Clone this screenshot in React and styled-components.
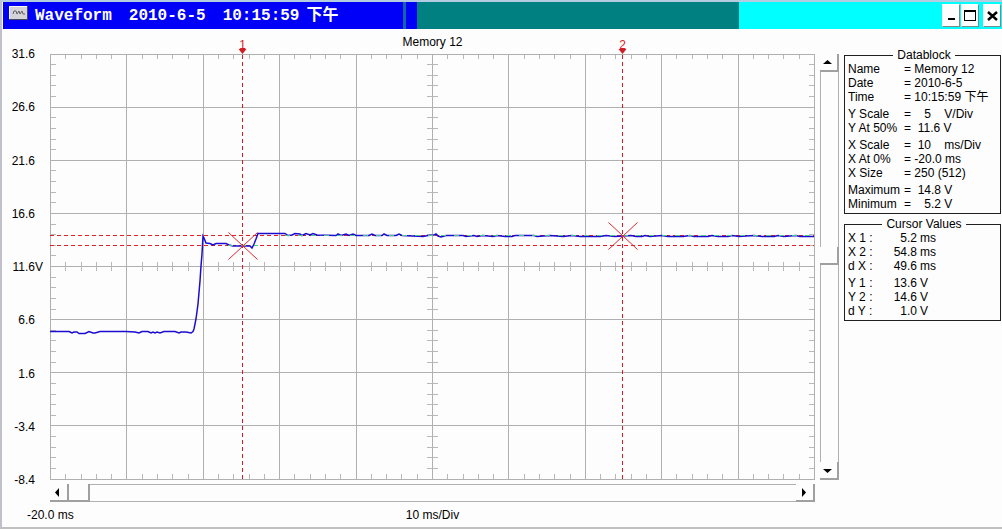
import React from "react";
import styled, { createGlobalStyle } from "styled-components";

const GRID_W = 764;
const GRID_H = 425;
const COLS = 10;
const ROWS = 8;

const yLabels = ["31.6", "26.6", "21.6", "16.6", "11.6", "6.6", "1.6", "-3.4", "-8.4"];

const datablock = [
  [
    ["Name", "= Memory 12"],
    ["Date", "= 2010-6-5"],
    ["Time", "= 10:15:59 下午"],
  ],
  [
    ["Y Scale", "=    5    V/Div"],
    ["Y At 50%", "=  11.6 V"],
  ],
  [
    ["X Scale", "=  10    ms/Div"],
    ["X At 0%", "= -20.0 ms"],
    ["X Size", "= 250 (512)"],
  ],
  [
    ["Maximum", "=  14.8 V"],
    ["Minimum", "=    5.2 V"],
  ],
];

const cursorValues = [
  [
    ["X 1 :", "5.2", "ms"],
    ["X 2 :", "54.8", "ms"],
    ["d X :", "49.6", "ms"],
  ],
  [
    ["Y 1 :", "13.6", "V"],
    ["Y 2 :", "14.6", "V"],
    ["d Y :", "1.0", "V"],
  ],
];

const cursors = [
  { name: "1", x: 192.5, y: 191.5 },
  { name: "2", x: 572.5, y: 181.5 },
];

const trace =
  "0,277.5 19,277.5 22,279 24,278 27,278 29,279.5 35,279.5 39,277.5 43,279 45,279 50,277.5 " +
  "76,277.5 85,278 89,279 92,277.5 98,277.5 101,279 103,278 105,279 107,278 110,279 114,277.5 " +
  "125,277.5 129,279 131,278 136,278 141,279 143,277.5 144,275 146,265 148,250 150,227 151,212 " +
  "152,200 153,182 154,184 156,189 160,189.5 163,191 166,189.5 176,189.5 179,191 183,192 200,192 " +
  "202,194 204,190 206,185 208,179.5 235,179.5 238,181.5 242,181 245,179.5 250,180 252,181.5 " +
  "256,179.5 260,181 263,179.5 267,181 286,181.5 288,180 291,181.5 296,180 299,181.5 303,180 " +
  "306,181.5 319,181.5 322,180 325,181.5 332,181.5 334,180 337,181.5 346,181.5 349,180 352,181.5 " +
  "373,182.5 378,181.5 384,181 386,180 388,182 391,183 396,181.5 413,181.5 416,182.5 424,181.5 " +
  "427,182.5 433,181.5 443,182.5 447,181.5 455,182.5 462,182.5 465,181.5 484,181.5 487,182.5 " +
  "500,181.5 513,182.5 522,181.5 530,182.5 550,182.5 556,181.5 565,182.5 581,181.5 586,182.5 " +
  "592,182.5 595,181.5 600,182.5 612,181.5 618,182.5 633,182.5 640,181.5 644,182.5 658,182.5 " +
  "662,181.5 668,182.5 678,182.5 682,181.5 689,182.5 704,181.5 712,182.5 724,182.5 728,181.5 " +
  "734,182.5 746,181.5 750,182.5 764,182.5";

const range = (n) => Array.from({ length: n }, (_, i) => i);

const gridX = (i) => Math.round((i * GRID_W) / COLS) + 0.5;
const gridY = (i) => Math.floor((i * GRID_H) / ROWS) + 0.5;

const Graticule = () => {
  const major = [
    ...range(COLS + 1).map((i) => `M${gridX(i)} 0V${GRID_H + 1}`),
    ...range(ROWS + 1).map((i) => `M0 ${gridY(i)}H${GRID_W + 1}`),
  ].join("");

  // five small ticks to a division
  const minorX = range(COLS * 5)
    .filter((i) => i % 5 !== 0)
    .map((i) => gridX(i / 5))
    .map((x) => `M${x} 1V5M${x} 208V217M${x} 420V425`)
    .join("");
  const minorY = range(ROWS * 5)
    .filter((i) => i % 5 !== 0)
    .map((i) => gridY(i / 5))
    .map((y) => `M1 ${y}H6M377 ${y}H388M759 ${y}H764`)
    .join("");

  return (
    <g fill="none" shapeRendering="crispEdges">
      <path d={major} stroke="#b0b0b0" />
      <path d={minorX + minorY} stroke="#b8b8b8" />
    </g>
  );
};

const Cursor = ({ name, x, y }) => (
  <g>
    <path d={`M${x} 1V425`} fill="none" stroke="#d81824" strokeDasharray="4 3" />
    <path d={`M0 ${y}H764`} fill="none" stroke="#e02028" strokeDasharray="4 3" />
    <path d={`M${x - 4} -5h8l-4 5z`} fill="#d01c24" />
    <CursorName x={x} y="-5">{name}</CursorName>
  </g>
);

const Plot = () => (
  <PlotSvg viewBox="0 0 765 426" role="img" aria-label="Memory 12">
    <Graticule />
    {cursors.map((c) => (
      <Cursor key={c.name} {...c} />
    ))}
    <polyline points={trace} fill="none" stroke="#1c0cd0" strokeWidth="1.5" />
    <path
      d="M178 191.5H208M235 181.5H764"
      fill="none"
      stroke="#48c890"
      strokeDasharray="5 8"
      strokeWidth="1"
    />
    {cursors.map((c) => (
      <path
        key={c.name}
        d={`M${c.x - 14} ${c.y - 13}l29 27m0 -27l-29 27`}
        fill="none"
        stroke="#e02830"
      />
    ))}
  </PlotSvg>
);

const Arrow = ({ d }) => (
  <svg width="9" height="9" viewBox="0 0 9 9" aria-hidden="true">
    <path d={d} fill="#000" />
  </svg>
);

const App = () => {
  return (
    <>
      <GlobalStyle />
      <Window>
        <TitleBar>
          <AppIcon width="19" height="14" viewBox="0 0 19 14" aria-hidden="true">
            <path d="M0 0h19v14H0z" fill="#d4d4d8" />
            <path d="M18 0v13H0v1h19V0z" fill="#48485c" />
            <path d="M0 13V0h18v1H1v12z" fill="#f8f8f8" />
            <path d="M4 8l1-3h2l1 3 2-3 1 3 2-3 1 3h2" fill="none" stroke="#606068" />
          </AppIcon>
          <Title>
            <span>Waveform</span>
            <span>2010-6-5</span>
            <TitleTime>
              <span>10:15:59</span>
              <span>下午</span>
            </TitleTime>
          </Title>
          <WindowButtons>
            <WindowButton aria-label="Minimize">
              <svg width="13" height="13" viewBox="0 0 13 13">
                <path d="M3 9h7v2H3z" />
              </svg>
            </WindowButton>
            <WindowButton aria-label="Maximize">
              <svg width="13" height="13" viewBox="0 0 13 13">
                <path d="M0 1h12v11H0zM1 3v8h10V3z" fillRule="evenodd" />
              </svg>
            </WindowButton>
            <WindowButton aria-label="Close" $apart>
              <svg width="13" height="13" viewBox="0 0 13 13">
                <path d="M2 3l9 8m0 -8l-9 8" stroke="#000" strokeWidth="2.4" />
              </svg>
            </WindowButton>
          </WindowButtons>
        </TitleBar>

        <Content>
          <PlotTitle>Memory 12</PlotTitle>
          <YAxis>
            {yLabels.map((label) => (
              <YLabel key={label}>
                <span>{label}</span>
                {label === "11.6" && "V"}
              </YLabel>
            ))}
          </YAxis>
          <Plot />
          <VScroll>
            <ArrowButton aria-label="Scroll up" $vertical>
              <Arrow d="M0 6l4.5 -4L9 6z" />
            </ArrowButton>
            <VTrack type="range" aria-label="Vertical position" defaultValue="47" />
            <ArrowButton aria-label="Scroll down" $vertical>
              <Arrow d="M0 3l4.5 4L9 3z" />
            </ArrowButton>
          </VScroll>
          <HScroll>
            <ArrowButton aria-label="Scroll left">
              <Arrow d="M6 0L2 4.5L6 9z" />
            </ArrowButton>
            <HTrack type="range" aria-label="Horizontal position" defaultValue="0" />
            <ArrowButton aria-label="Scroll right">
              <Arrow d="M3 0l4 4.5L3 9z" />
            </ArrowButton>
          </HScroll>
          <XStart>-20.0 ms</XStart>
          <XUnit>10 ms/Div</XUnit>

          <SidePanel>
            <Group>
              <legend>Datablock</legend>
              <DataTable>
                {datablock.map((rows, i) => (
                  <RowGroup key={i}>
                    {rows.map(([label, value]) => (
                      <tr key={label}>
                        <LabelCell $width="56px">{label}</LabelCell>
                        <ValueCell>{value}</ValueCell>
                      </tr>
                    ))}
                  </RowGroup>
                ))}
              </DataTable>
            </Group>
            <Group>
              <legend>Cursor Values</legend>
              <DataTable>
                {cursorValues.map((rows, i) => (
                  <RowGroup key={i}>
                    {rows.map(([label, value, unit]) => (
                      <tr key={label}>
                        <LabelCell $width="36px">{label}</LabelCell>
                        <NumberCell>{value}</NumberCell>
                        <ValueCell>{unit}</ValueCell>
                      </tr>
                    ))}
                  </RowGroup>
                ))}
              </DataTable>
            </Group>
          </SidePanel>
        </Content>
      </Window>
    </>
  );
};

export default App;

const GlobalStyle = createGlobalStyle`
  * {
    box-sizing: border-box;
  }

  body {
    margin: 0;
    background: #fdfdfd;
    color: #000;
    font: 12px/14px "Liberation Sans", "Noto Sans CJK SC", sans-serif;
  }
`;

const Window = styled.div`
  display: flex;
  flex-direction: column;
  min-height: 100vh;
  border-top: 2px solid #b4cce0;
  border-left: 2px solid #c0c0cc;
  border-bottom: 2px solid #c0c0c0;
  padding-left: 1px;
`;

const TitleBar = styled.header`
  display: flex;
  align-items: center;
  height: 27px;
  padding-left: 6px;
  background: linear-gradient(
    to right,
    #0000f8 400px,
    #1464a8 400px 403px,
    #0000f8 403px 414px,
    #008080 414px 73.7%,
    #00ffff 73.7%
  );
`;

const AppIcon = styled.svg`
  align-self: flex-start;
  margin-top: 4px;
`;

const Title = styled.h1`
  display: flex;
  flex: 1;
  gap: 17px;
  margin: 0 0 0 7px;
  color: #fff;
  font: bold 16px/20px "Liberation Mono", "Noto Sans CJK SC", monospace;
`;

const TitleTime = styled.span`
  display: flex;
  gap: 7px;
`;

const WindowButtons = styled.div`
  display: flex;
  gap: 1px;
  padding-right: 1px;
`;

const WindowButton = styled.button`
  display: flex;
  align-items: center;
  justify-content: center;
  width: 18px;
  height: 23px;
  margin-left: ${({ $apart }) => ($apart ? "3px" : "0")};
  padding: 0;
  border: 1px solid #fff;
  border-right-color: #788c8c;
  border-bottom-color: #788c8c;
  background: #fdfdfd;
`;

const Content = styled.main`
  display: grid;
  flex: 1;
  grid-template-columns: 47px minmax(0, 1fr) 24px 162px;
  grid-template-rows: 25px auto 22px 1fr;
  padding-right: 1px;
`;

const PlotTitle = styled.h2`
  grid-area: 1 / 2;
  align-self: center;
  margin: 0;
  font-size: 12px;
  font-weight: normal;
  text-align: center;
`;

const YAxis = styled.div`
  grid-area: 2 / 1;
  display: flex;
  flex-direction: column;
  justify-content: space-between;
  margin: -7px 0;
`;

const YLabel = styled.div`
  display: flex;

  span {
    width: 32px;
    text-align: right;
  }
`;

const PlotSvg = styled.svg`
  grid-area: 2 / 2;
  display: block;
  width: 100%;
  overflow: visible;
`;

const CursorName = styled.text`
  fill: #d81824;
  font-size: 12px;
  text-anchor: middle;
`;

const ArrowButton = styled.button`
  display: flex;
  flex: none;
  align-items: center;
  justify-content: center;
  width: 19px;
  height: ${({ $vertical }) => ($vertical ? "18px" : "100%")};
  padding: 0 2px 0 0;
  border: 0;
  border-right: 2px solid #a0a0a0;
  border-bottom: 2px solid #a0a0a0;
  background: #fdfdfd;
`;

const VScroll = styled.div`
  grid-area: 2 / 3;
  display: flex;
  flex-direction: column;
  min-height: 0;
  margin-left: 5px;
`;

const HScroll = styled.div`
  grid-area: 3 / 2;
  display: flex;
  margin-top: 4px;
`;

const Track = styled.input`
  flex: 1;
  min-width: 0;
  min-height: 0;
  margin: 0;
  border: 0 solid #b0b0b0;
  background: #fdfdfd;
  appearance: none;

  &::-webkit-slider-thumb {
    width: 21px;
    height: 18px;
    border: 0 solid #a0a0a0;
    border-width: 0 2px 2px 0;
    background: #fdfdfd;
    appearance: none;
  }
`;

const HTrack = styled(Track)`
  border-width: 1px 0;
`;

const VTrack = styled(Track)`
  width: 19px;
  border-width: 0 1px;
  writing-mode: vertical-lr;

  &::-webkit-slider-thumb {
    width: 19px;
    height: 18px;
  }
`;

const XStart = styled.div`
  grid-area: 4 / 1 / 5 / 3;
  padding: 6px 0 0 24px;
`;

const XUnit = styled.div`
  grid-area: 4 / 2;
  padding-top: 6px;
  text-align: center;
`;

const SidePanel = styled.aside`
  grid-area: 1 / 4 / 5 / 5;
  display: flex;
  flex-direction: column;
  gap: 3px;
  padding: 19px 0 0 5px;
`;

const Group = styled.fieldset`
  min-width: 0;
  margin: 0;
  padding: 0 0 2px 3px;
  border: 1px solid #202020;

  legend {
    margin: 0 auto;
    padding: 0 4px;
  }
`;

const DataTable = styled.table`
  border-collapse: collapse;
`;

const RowGroup = styled.tbody`
  & + & > tr:first-child > * {
    padding-top: 3px;
  }
`;

const LabelCell = styled.th`
  width: ${({ $width }) => $width};
  padding: 0;
  font-weight: normal;
  text-align: left;
  white-space: nowrap;
`;

const ValueCell = styled.td`
  padding: 0;
  white-space: pre;
`;

const NumberCell = styled.td`
  width: 36px;
  padding: 0 3px 0 0;
  text-align: right;
`;
